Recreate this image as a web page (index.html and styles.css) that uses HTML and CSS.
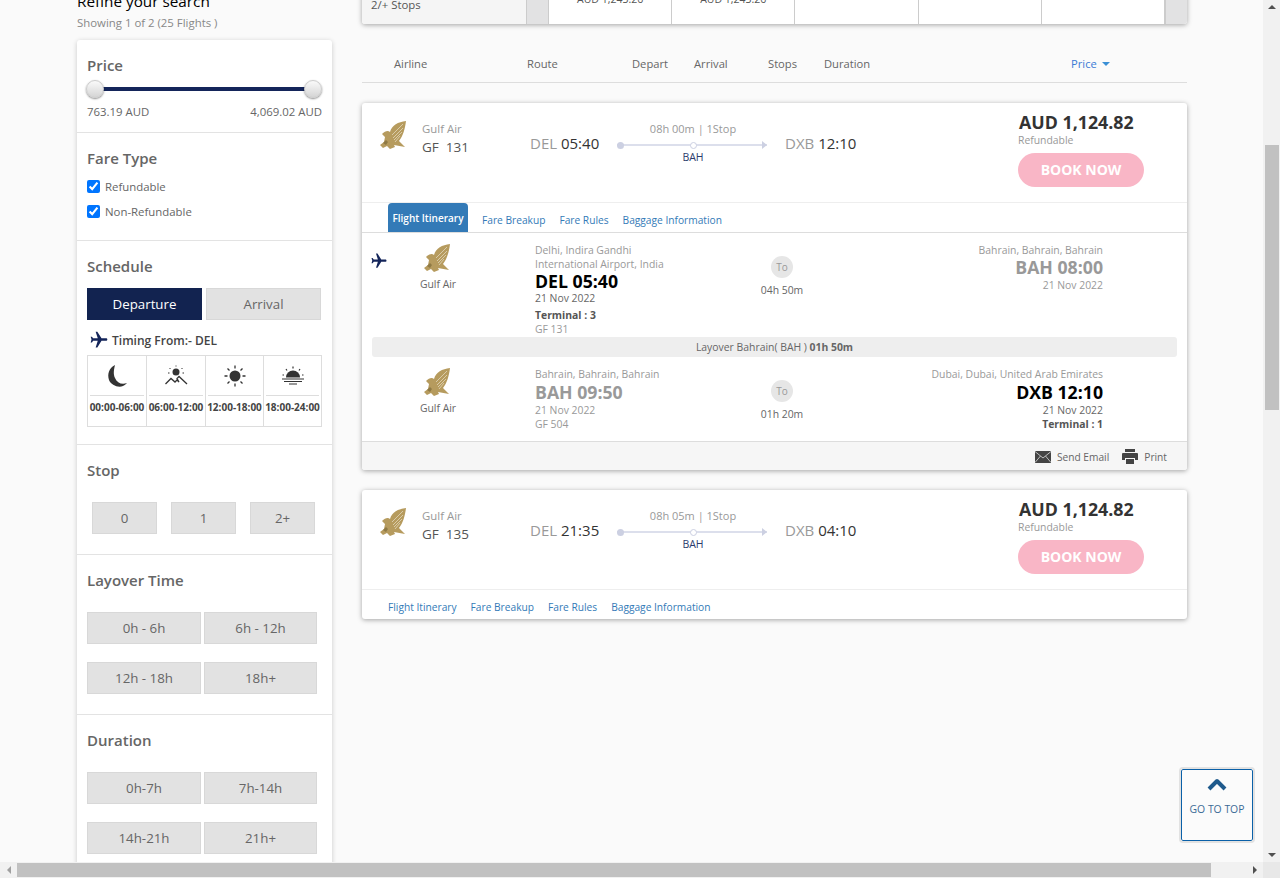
FILE: index.html
```html
<!DOCTYPE html>
<html>
<head>
    <title>Flight Results</title>
    <link rel="stylesheet" href="styles.css">
</head>
<body>
    <svg class="defs" width="0" height="0">
        <symbol id="eagle" viewBox="0 0 28 30">
            <path fill="#b69b5e" d="M26 0C18 1 12 4 10 11 8 9 5 10 2 13l3 3-1 5-4 3 3 3 4-2 3 3 5-2-1-2 11 2-6-6C23 15 25 8 26 0z"/>
            <path stroke="#e9e0c8" stroke-width=".7" fill="none" d="M23 3 12 14M23 7 13 17M22 11 14 19M20 15 15 21"/>
            <path fill="#8f7a45" d="M3 22l3-3 2 2-2 3z"/>
        </symbol>
        <symbol id="plane" viewBox="0 0 24 24">
            <path transform="rotate(90 12 12)" d="M21 16v-2l-8-5V3.5c0-.83-.67-1.5-1.5-1.5S10 2.67 10 3.5V9l-8 5v2l8-2.5V19l-2 1.5V22l3.5-1 3.5 1v-1.5L13 19v-5.5l8 2.5z"/>
        </symbol>
    </svg>

    <div class="shell">
        <div class="viewport">
            <div class="page">
                <aside class="sidebar">
                    <h2 class="refine">Refine your search</h2>
                    <p class="showing">Showing 1 of 2 (25 Flights )</p>

                    <div class="filters">
                        <section class="filter">
                            <h3>Price</h3>
                            <div class="slider"><span class="knob"></span><span class="knob"></span></div>
                            <div class="price-range"><span>763.19 AUD</span><span>4,069.02 AUD</span></div>
                        </section>

                        <section class="filter fare">
                            <h3>Fare Type</h3>
                            <label class="check"><input type="checkbox" checked> Refundable</label>
                            <label class="check"><input type="checkbox" checked> Non-Refundable</label>
                        </section>

                        <section class="filter schedule">
                            <h3>Schedule</h3>
                            <div class="toggle">
                                <button class="btn active">Departure</button>
                                <button class="btn">Arrival</button>
                            </div>
                            <div class="timing"><svg class="timing-plane"><use href="#plane"/></svg>Timing From:- DEL</div>
                            <div class="slots">
                                <div class="slot">
                                    <div class="slot-icon">
                                        <svg width="26" height="26" viewBox="0 0 26 26"><path fill="#333" d="M11 2C5 5 3 11 5 17c2 5 9 8 14 6 2-1 3-2 4-3-5 2-10 0-12-5-2-4-1-9 0-13z"/></svg>
                                    </div>
                                    <div class="slot-time">00:00-06:00</div>
                                </div>
                                <div class="slot">
                                    <div class="slot-icon">
                                        <svg width="24" height="24" viewBox="0 0 24 24" fill="none" stroke="#333"><circle cx="12" cy="8" r="3.5" fill="#333" stroke="none"/><path stroke-width="1" stroke-dasharray="1.5 1.5" d="M12 1.5v1M5.500 4l1 1M18.500 4l-1 1M4 9h1.500M18.500 9H20"/><path stroke-width="1.300" d="M1.500 20 7 14.500l4 3.500 2-2 2 2-2-3.500 2-2 8 7.500"/></svg>
                                    </div>
                                    <div class="slot-time">06:00-12:00</div>
                                </div>
                                <div class="slot">
                                    <div class="slot-icon">
                                        <svg width="22" height="22" viewBox="0 0 22 22"><circle cx="11" cy="11" r="5.500" fill="#333"/><path stroke="#333" stroke-width="1.300" d="M11 .5v3M11 18.500v3M.5 11h3M18.500 11h3M3.500 3.500l2 2M16.500 16.500l2 2M18.500 3.500l-2 2M5.500 16.500l-2 2"/></svg>
                                    </div>
                                    <div class="slot-time">12:00-18:00</div>
                                </div>
                                <div class="slot">
                                    <div class="slot-icon">
                                        <svg width="24" height="20" viewBox="0 0 24 20"><path fill="#333" d="M5 11.500a7 7 0 0 1 14 0z"/><path stroke="#333" stroke-width="1.200" d="M1 13h22M3 15.500h18M8 18h8M12 .5v2M5 3l1 1.500M19 3l-1 1.500M1.500 9H3M21 9h1.500"/></svg>
                                    </div>
                                    <div class="slot-time">18:00-24:00</div>
                                </div>
                            </div>
                        </section>

                        <section class="filter">
                            <h3>Stop</h3>
                            <div class="stops">
                                <button class="btn">0</button>
                                <button class="btn">1</button>
                                <button class="btn">2+</button>
                            </div>
                        </section>

                        <section class="filter">
                            <h3>Layover Time</h3>
                            <div class="btn-grid">
                                <button class="btn">0h - 6h</button>
                                <button class="btn">6h - 12h</button>
                                <button class="btn">12h - 18h</button>
                                <button class="btn">18h+</button>
                            </div>
                        </section>

                        <section class="filter">
                            <h3>Duration</h3>
                            <div class="btn-grid">
                                <button class="btn">0h-7h</button>
                                <button class="btn">7h-14h</button>
                                <button class="btn">14h-21h</button>
                                <button class="btn">21h+</button>
                            </div>
                        </section>
                    </div>
                </aside>

                <main class="results">
                    <div class="matrix">
                        <div class="matrix-label">2/+ Stops</div>
                        <div class="matrix-nav"></div>
                        <div class="matrix-cell">AUD 1,243.26</div>
                        <div class="matrix-cell">AUD 1,243.26</div>
                        <div class="matrix-cell"></div>
                        <div class="matrix-cell"></div>
                        <div class="matrix-cell"></div>
                        <div class="matrix-nav right"></div>
                    </div>

                    <div class="list-head">
                        <span>Airline</span>
                        <span>Route</span>
                        <span>Depart</span>
                        <span>Arrival</span>
                        <span>Stops</span>
                        <span>Duration</span>
                        <span class="sort">Price <i class="caret"></i></span>
                    </div>

                    <article class="card">
                        <div class="summary">
                            <svg class="logo"><use href="#eagle"/></svg>
                            <div class="airline"><div class="airline-name">Gulf Air</div><div class="flight-no">GF&nbsp; 131</div></div>
                            <div class="place"><span>DEL</span> 05:40</div>
                            <div class="route">
                                <div class="route-top">08h 00m | 1Stop</div>
                                <div class="route-line"><i class="dot"></i><i class="via"></i><i class="arrow"></i></div>
                                <div class="route-via">BAH</div>
                            </div>
                            <div class="place to"><span>DXB</span> 12:10</div>
                            <div class="fare-box">
                                <div class="amount">AUD 1,124.82</div>
                                <div class="refund">Refundable</div>
                                <button class="book">BOOK NOW</button>
                            </div>
                        </div>
                        <nav class="tabs">
                            <a class="tab selected">Flight Itinerary</a>
                            <a class="tab">Fare Breakup</a>
                            <a class="tab">Fare Rules</a>
                            <a class="tab">Baggage Information</a>
                        </nav>
                        <div class="itinerary">
                            <div class="leg first">
                                <svg class="leg-plane"><use href="#plane"/></svg>
                                <div class="leg-airline"><svg class="logo"><use href="#eagle"/></svg><div>Gulf Air</div></div>
                                <div class="stop-info">
                                    <div class="muted">Delhi, Indira Gandhi<br>International Airport, India</div>
                                    <div class="code">DEL 05:40</div>
                                    <div class="date">21 Nov 2022</div>
                                    <div class="terminal">Terminal : 3</div>
                                    <div class="muted">GF 131</div>
                                </div>
                                <div class="leg-mid"><span class="to-badge">To</span><div>04h 50m</div></div>
                                <div class="stop-info end">
                                    <div class="muted">Bahrain, Bahrain, Bahrain</div>
                                    <div class="code grey">BAH 08:00</div>
                                    <div class="muted">21 Nov 2022</div>
                                </div>
                            </div>
                            <div class="layover">Layover Bahrain( BAH ) <b>01h 50m</b></div>
                            <div class="leg">
                                <div></div>
                                <div class="leg-airline"><svg class="logo"><use href="#eagle"/></svg><div>Gulf Air</div></div>
                                <div class="stop-info">
                                    <div class="muted">Bahrain, Bahrain, Bahrain</div>
                                    <div class="code grey">BAH 09:50</div>
                                    <div class="muted">21 Nov 2022</div>
                                    <div class="muted">GF 504</div>
                                </div>
                                <div class="leg-mid"><span class="to-badge">To</span><div>01h 20m</div></div>
                                <div class="stop-info end">
                                    <div class="muted">Dubai, Dubai, United Arab Emirates</div>
                                    <div class="code">DXB 12:10</div>
                                    <div class="date">21 Nov 2022</div>
                                    <div class="terminal tight">Terminal : 1</div>
                                </div>
                            </div>
                        </div>
                        <div class="card-foot">
                            <svg width="16" height="12" viewBox="0 0 16 12"><path fill="#444" d="M0 0h16v12H0z"/><path fill="none" stroke="#ddd" stroke-width=".8" d="M0 .5 8 7l8-6.500M0 11.500l5.500-6.500M16 11.500 10.500 5"/></svg>
                            <span class="foot-link">Send Email</span>
                            <svg width="16" height="15" viewBox="0 0 16 15"><path fill="#444" d="M3 0h10v3H3zM1 4h14a1 1 0 0 1 1 1v6h-3V9H3v2H0V5a1 1 0 0 1 1-1zM4 10h8v5H4z"/></svg>
                            <span class="foot-link">Print</span>
                        </div>
                    </article>

                    <article class="card">
                        <div class="summary">
                            <svg class="logo"><use href="#eagle"/></svg>
                            <div class="airline"><div class="airline-name">Gulf Air</div><div class="flight-no">GF&nbsp; 135</div></div>
                            <div class="place"><span>DEL</span> 21:35</div>
                            <div class="route">
                                <div class="route-top">08h 05m | 1Stop</div>
                                <div class="route-line"><i class="dot"></i><i class="via"></i><i class="arrow"></i></div>
                                <div class="route-via">BAH</div>
                            </div>
                            <div class="place to"><span>DXB</span> 04:10</div>
                            <div class="fare-box">
                                <div class="amount">AUD 1,124.82</div>
                                <div class="refund">Refundable</div>
                                <button class="book">BOOK NOW</button>
                            </div>
                        </div>
                        <nav class="tabs">
                            <a class="tab">Flight Itinerary</a>
                            <a class="tab">Fare Breakup</a>
                            <a class="tab">Fare Rules</a>
                            <a class="tab">Baggage Information</a>
                        </nav>
                    </article>
                </main>
            </div>
        </div>

        <!-- scrollbars are drawn by hand so the shot keeps its scrolled look -->
        <div class="vbar">
            <i class="tri up"></i>
            <div class="vtrack"><div class="vthumb"></div></div>
            <i class="tri down"></i>
        </div>
        <div class="hbar">
            <i class="tri left"></i>
            <div class="htrack"><div class="hthumb"></div></div>
            <i class="tri right"></i>
        </div>
        <div class="corner"></div>

        <a class="go-top">
            <svg width="20" height="14" viewBox="0 0 20 14"><path fill="none" stroke="#1f5a8c" stroke-width="4" stroke-linejoin="round" d="M2 12l8-8 8 8"/></svg>
            <span>GO TO TOP</span>
        </a>
    </div>
</body>
</html>
```

FILE: styles.css
```css
* {
    box-sizing: border-box;
}

html, body {
    margin: 0;
    padding: 0;
    height: 100%;
    overflow: hidden;
}

body {
    font-family: "Open Sans", "Noto Sans", sans-serif;
    font-size: 11.4px;
    color: #666;
    background-color: #fafafa;
}

.defs {
    display: block;
    height: 0;
}

.shell {
    position: relative;
    height: 878px;
    display: grid;
    grid-template-columns: 1fr 17px;
    grid-template-rows: 1fr 16px;
}

.viewport {
    overflow: hidden;
}

.page {
    display: flex;
    align-items: flex-start;
    gap: 30px;
    padding-left: 77px;
    width: 1200px;
}

/* sidebar */
.sidebar {
    width: 255px;
    flex: none;
    margin-top: -9px;
}

.refine {
    margin: 0;
    font-size: 15.3px;
    line-height: 20px;
    font-weight: 400;
    color: #000;
}

.showing {
    margin: 4px 0 0;
    line-height: 16px;
    color: #888;
}

.filters {
    margin-top: 9px;
    background: #fff;
    border-radius: 3px;
    box-shadow: 0 1px 5px rgba(0, 0, 0, 0.2);
}

.filter {
    padding: 15px 10px 20px;
    border-bottom: 1px solid #e3e3e3;
}

.filter h3 {
    margin: 0;
    font-size: 15px;
    line-height: 20px;
    font-weight: 600;
    color: #666;
}

.slider {
    display: flex;
    justify-content: space-between;
    margin: 5px 0 0 -1px;
    height: 18px;
    background: linear-gradient(#14255a, #14255a) center / calc(100% - 18px) 4px no-repeat;
}

.knob {
    width: 18px;
    height: 18px;
    border-radius: 50%;
    background: linear-gradient(#fafafa, #d5d5d5);
    border: 1px solid #ccc;
    box-shadow: 0 1px 2px rgba(0, 0, 0, 0.45);
}

.price-range {
    display: flex;
    justify-content: space-between;
    margin-top: 6px;
    line-height: 16px;
    margin-bottom: -8px;
}

.fare {
    padding-bottom: 16px;
}

.fare h3 {
    margin-bottom: 6px;
}

.check {
    display: flex;
    align-items: center;
    gap: 5px;
    height: 25px;
}

.check input {
    margin: 0;
    width: 13px;
    height: 13px;
}

.btn {
    font-family: inherit;
    font-size: 13.3px;
    color: #666;
    height: 32px;
    padding: 0 0 1px;
    background: #e2e2e2;
    border: 1px solid #d8d8d8;
}

.btn.active {
    background: #122350;
    border-color: #122350;
    color: #fff;
}

.toggle {
    display: grid;
    grid-template-columns: 115px 115px;
    gap: 4px;
    margin-top: 12px;
}

.timing {
    display: flex;
    align-items: center;
    gap: 3px;
    height: 20px;
    margin-top: 10px;
    padding-left: 2px;
    font-size: 12px;
    font-weight: 600;
    color: #444;
}

.timing-plane {
    width: 20px;
    height: 20px;
    fill: #14255a;
}

.schedule {
    padding-bottom: 17px;
}

.slots {
    display: grid;
    grid-template-columns: 59px 59px 58px 1fr;
    margin-top: 5px;
    height: 72px;
    border: 1px solid #ddd;
}

.slot {
    border-right: 1px solid #ddd;
    padding: 0 2px;
}

.slot:last-child {
    border-right: none;
}

.slot-icon {
    height: 40px;
    display: flex;
    align-items: center;
    justify-content: center;
    border-bottom: 1px solid #ddd;
}

.slot-time {
    margin: 4px -2px 0;
    text-align: center;
    font-size: 10px;
    line-height: 15px;
    font-weight: 700;
    color: #444;
    white-space: nowrap;
}

.stops {
    display: grid;
    grid-template-columns: repeat(3, 65px);
    gap: 14px;
    margin: 22px 0 0 5px;
}

.btn-grid {
    display: grid;
    grid-template-columns: 114px 113px;
    gap: 18px 3px;
    margin-top: 22px;
}

/* results */
.results {
    width: 825px;
    flex: none;
}

.matrix {
    display: grid;
    grid-template-columns: 165px 21px repeat(5, 123.2px) 1fr;
    height: 60px;
    margin-top: -36px;
    background: #fff;
    border-radius: 3px;
    box-shadow: 0 1px 5px rgba(0, 0, 0, 0.35);
    overflow: hidden;
}

.matrix-label {
    padding: 32px 0 0 9px;
    line-height: 18px;
    background: #f5f5f5;
    color: #555;
    border-right: 1px solid #ccc;
}

.matrix-nav {
    background: #e2e2e3;
}

.matrix-nav.right {
    border-left: 2px solid #ccc;
}

.matrix-cell {
    padding-top: 26px;
    line-height: 18px;
    text-align: center;
    font-size: 10.5px;
    color: #555;
    border-left: 1px solid #ccc;
}

.list-head {
    display: grid;
    grid-template-columns: 133px 105px 62px 74px 56px 247px auto;
    padding: 31px 0 9px 32px;
    font-size: 11.2px;
    line-height: 18px;
    color: #666;
    border-bottom: 1px solid #ddd;
}

.sort {
    color: #3a7bd5;
}

.caret {
    display: inline-block;
    margin-left: 2px;
    vertical-align: 2px;
    border-left: 4px solid transparent;
    border-right: 4px solid transparent;
    border-top: 4px solid #3a8fd5;
}

.card {
    margin-top: 20px;
    background: #fff;
    border-radius: 3px;
    box-shadow: 0 1px 5px rgba(0, 0, 0, 0.35);
}

.summary {
    display: grid;
    grid-template-columns: 42px 108px 87px 150px 251px auto;
    height: 100px;
    padding: 18px 0 0 18px;
    border-bottom: 1px solid #eee;
}

.logo {
    display: block;
    width: 28px;
    height: 30px;
}

.airline-name {
    line-height: 16px;
    color: #999;
}

.flight-no {
    font-size: 13.5px;
    line-height: 20px;
    color: #555;
}

.place {
    margin-top: 11px;
    font-size: 15px;
    line-height: 22px;
    color: #333;
}

.place span {
    color: #999;
}

.place.to {
    padding-left: 18px;
}

.route {
    text-align: center;
    padding-left: 2px;
}

.route-top {
    font-size: 11px;
    line-height: 16px;
    color: #999;
}

.route-line {
    display: flex;
    justify-content: space-between;
    align-items: center;
    height: 12px;
    margin: 2px 0 0 -2px;
    background: linear-gradient(#dcdfec, #dcdfec) center / 100% 2px no-repeat;
}

.dot {
    width: 7px;
    height: 7px;
    border-radius: 50%;
    background: #ccd0e2;
}

.via {
    width: 7px;
    height: 7px;
    border-radius: 50%;
    background: #fff;
    border: 1px solid #ccd0e2;
}

.arrow {
    border-left: 5px solid #ccd0e2;
    border-top: 4px solid transparent;
    border-bottom: 4px solid transparent;
}

.route-via {
    margin-top: -2px;
    font-size: 10.5px;
    line-height: 16px;
    color: #2a3a6c;
}

.fare-box {
    margin-top: -10px;
}

.amount {
    margin-left: 1px;
    font-size: 17.8px;
    line-height: 22px;
    font-weight: 700;
    color: #333;
}

.refund {
    font-size: 10.4px;
    line-height: 14px;
    color: #999;
}

.book {
    display: block;
    width: 126px;
    height: 34px;
    margin-top: 6px;
    padding: 0 0 2px;
    font-family: inherit;
    font-size: 14px;
    font-weight: 700;
    color: #fff;
    background: #f9b6c6;
    border: none;
    border-radius: 17px;
}

.tabs {
    display: flex;
    gap: 14px;
    height: 29px;
    padding-left: 26px;
    align-items: center;
}

.tab {
    font-size: 10.2px;
    line-height: 14px;
    padding-top: 5px;
    color: #337ab7;
}

.tab.selected {
    align-self: stretch;
    width: 80px;
    padding: 8px 0 0;
    text-align: center;
    font-size: 10px;
    color: #fff;
    font-weight: 600;
    background: #337ab7;
    border-radius: 4px 4px 0 0;
}

.itinerary {
    border-top: 1px solid #ddd;
    padding-top: 10px;
}

.leg {
    display: grid;
    grid-template-columns: 40px 125px 217px 60px 291px;
    padding-left: 8px;
    height: 74px;
    font-size: 10.4px;
    line-height: 14px;
}

.leg.first {
    height: 94px;
}

.leg-plane {
    width: 18px;
    height: 18px;
    margin-top: 9px;
    fill: #14255a;
}

.leg-airline {
    width: 56px;
    text-align: center;
    color: #666;
}

.leg-airline .logo {
    margin: 1px auto 3px;
}

.stop-info {
    color: #666;
}

.stop-info.end {
    text-align: right;
}

.muted {
    color: #999;
}

.date {
    color: #666;
}

.code {
    font-size: 17.7px;
    line-height: 22px;
    font-weight: 700;
    color: #000;
}

.code.grey {
    color: #999;
}

.first .code {
    line-height: 21px;
}

.first .date {
    line-height: 12px;
}

.terminal {
    margin-top: 4px;
    font-weight: 700;
    color: #555;
}

.terminal.tight {
    margin: 0;
}

.leg-mid {
    text-align: center;
    color: #666;
    padding-top: 13px;
}

.to-badge {
    display: block;
    width: 22px;
    height: 22px;
    margin: 0 auto 5px;
    border-radius: 50%;
    background: #e6e6e6;
    font-size: 10px;
    line-height: 22px;
    color: #999;
}

.layover {
    margin: 0 10px 10px;
    height: 20px;
    font-size: 10.4px;
    line-height: 20px;
    text-align: center;
    background: #eee;
    border-radius: 3px;
    color: #666;
}

.card-foot {
    display: flex;
    align-items: center;
    justify-content: flex-end;
    gap: 6px;
    height: 29px;
    padding: 1px 20px 0 0;
    background: #f6f6f6;
    border-top: 1px solid #ddd;
    border-radius: 0 0 3px 3px;
}

.foot-link {
    font-size: 10.2px;
    margin-right: 7px;
}

.foot-link:last-child {
    margin-right: 0;
}

/* scrollbars */
.vbar {
    display: flex;
    flex-direction: column;
    align-items: center;
    background: #f1f1f1;
}

.vtrack {
    flex: 1;
    width: 100%;
    padding: 131px 1px 0 2px;
}

.vthumb {
    height: 265px;
    background: #c1c1c1;
}

.hbar {
    display: flex;
    align-items: center;
    background: #f1f1f1;
}

.htrack {
    flex: 1;
    height: 100%;
    padding: 1px 0;
}

.hthumb {
    width: 1194px;
    height: 100%;
    background: #c1c1c1;
}

.corner {
    background: #e8e8e8;
}

.tri {
    display: block;
    width: 0;
    height: 0;
    flex: none;
}

.tri.up {
    margin: 5px 0;
    border: 4px solid transparent;
    border-top: 0;
    border-bottom: 4px solid #505050;
}

.tri.down {
    margin: 5px 0;
    border: 4px solid transparent;
    border-bottom: 0;
    border-top: 4px solid #505050;
}

.tri.left {
    margin: 0 6px 0 7px;
    border: 4px solid transparent;
    border-left: 0;
    border-right: 4px solid #a0a0a0;
}

.tri.right {
    margin: 0 6px 0 7px;
    border: 4px solid transparent;
    border-right: 0;
    border-left: 4px solid #505050;
}

/* floating button */
.go-top {
    position: absolute;
    left: 1181px;
    top: 769px;
    width: 72px;
    height: 72px;
    display: flex;
    flex-direction: column;
    align-items: center;
    padding-top: 7px;
    gap: 11px;
    background: #fbfbfb;
    border: 1px solid #0a60a8;
    border-radius: 2px;
    outline: 2px solid #e2e2e2;
    font-size: 10.4px;
    color: #3a6a96;
}
```
